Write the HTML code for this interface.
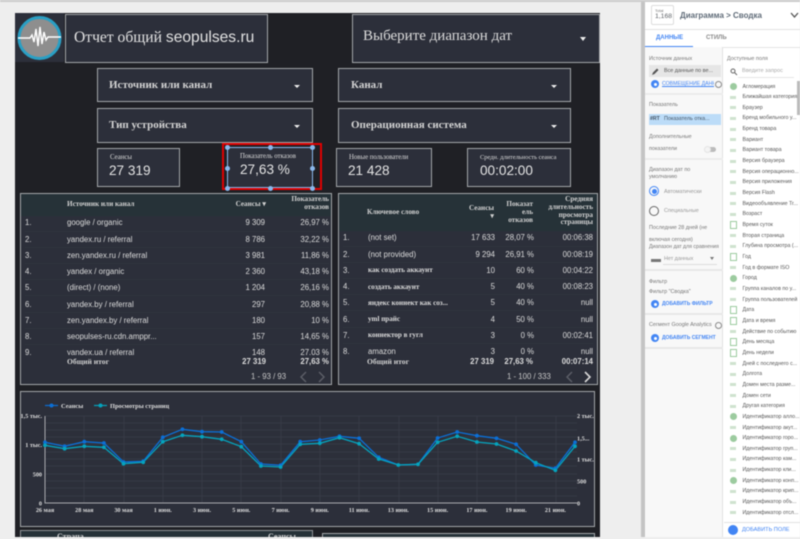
<!DOCTYPE html>
<html lang="ru"><head><meta charset="utf-8"><title>Отчет</title>
<style>
html,body{margin:0;padding:0;width:800px;height:539px;overflow:hidden;background:#eee}
#w{position:relative;width:800px;height:539px;overflow:hidden;filter:blur(.5px);font-family:"Liberation Serif","Noto Serif CJK SC",serif;color:#ddd}
#w div,#w span.a{position:absolute;box-sizing:border-box}
.b{background:#2c2f3a;border:1px solid #a3a6a9}
.s{font-family:"Liberation Sans",sans-serif}
.dd{font-size:11px;font-weight:bold;color:#d4d4d4}
.dd i{position:absolute;width:0;height:0;border:3px solid transparent;border-top:3px solid #eee;border-bottom:0;top:16px}
.k1{font-size:6.8px;color:#ddd;left:12px;top:5px;white-space:nowrap}
.k2{font-family:"Liberation Sans",sans-serif;font-size:13.6px;color:#e4e4e4;left:11px;top:14px;white-space:nowrap}
table{position:absolute;border-collapse:collapse;table-layout:fixed;font-size:7.8px;color:#dcdcdc}
td{height:16.2px;box-sizing:border-box;padding:0;white-space:nowrap;border-bottom:1px solid #30343e;font-family:"Liberation Sans",sans-serif;overflow:hidden}
td.r{text-align:right}td.c{font-family:"Liberation Serif",serif;font-weight:bold;font-size:7.1px}
.hd{font-size:7.2px;font-weight:bold;color:#d2d2d2;line-height:7.8px}
.r{text-align:right}
.side{font-family:"Liberation Sans",sans-serif;color:#777;white-space:nowrap}
.lst{left:724px;top:81.5px;width:76px;font-size:5.3px;line-height:10.67px;font-family:"Liberation Sans",sans-serif;color:#555}
.lst p{margin:0;height:10.67px;white-space:nowrap;padding-left:18.5px;position:relative;overflow:hidden}
.lst p:before{content:"";position:absolute;left:6px;top:3.5px;width:6px;height:3px;background:#cfe3cf}
.lst p.g:before{left:6px;top:1.5px;width:7px;height:7px;border-radius:50%;background:#9ccb9f}
.lst p.c:before{left:6px;top:1px;width:7px;height:8px;background:#fff;border:1px solid #9ccb9f;box-sizing:border-box}
.blue{color:#4285f4;font-weight:bold}
.plus{background:#4285f4;border-radius:50%;width:8px;height:8px}
.plus:after{content:"";position:absolute;left:2.500px;top:2.500px;width:3px;height:3px;background:#fff;border-radius:50%}
.h{width:5px;height:5px;border-radius:50%;background:#8ab8ec}
</style></head><body><div id="w">

<!-- top line, canvas -->
<div style="left:0;top:0;width:800px;height:2px;background:#ccc"></div>
<div style="left:15px;top:13px;width:585px;height:526px;background:#1f2025"></div>

<!-- logo -->
<div style="left:15px;top:13px;width:49px;height:49px;background:#2c2f3a"></div>
<svg style="position:absolute;left:15px;top:13px" width="49" height="49" viewBox="0 0 49 49">
<circle cx="24.5" cy="25" r="20.5" fill="#8e8e8e" stroke="#2a9fc4" stroke-width="3"/>
<path d="M3 25H15L17 22L19 29L21 16L23 33L25 14L27 31L29 19L31 27L33 24H46" fill="none" stroke="#fff" stroke-width="1.4"/>
</svg>

<!-- title -->
<div class="b" style="left:65px;top:14px;width:203px;height:49px"><span class="a" style="left:8px;top:14px;font-size:15.6px;white-space:nowrap;color:#e2e2e2">Отчет общий <span class="s" style="font-size:15.6px">seopulses.ru</span></span></div>
<div class="b" style="left:352px;top:14px;width:248px;height:49px"><span class="a" style="left:10px;top:13px;font-size:15px;white-space:nowrap;color:#dcdcdc">Выберите диапазон дат</span><i style="position:absolute;left:227px;top:22px;width:0;height:0;border:3px solid transparent;border-top:4px solid #eee;border-bottom:0"></i></div>

<!-- dropdowns -->
<div class="b dd" style="left:97px;top:68px;width:216px;height:34px"><span class="a" style="left:11px;top:10px;white-space:nowrap">Источник или канал</span><i style="left:196px"></i></div>
<div class="b dd" style="left:338px;top:68px;width:233px;height:34px"><span class="a" style="left:12px;top:10px;white-space:nowrap">Канал</span><i style="left:212px"></i></div>
<div class="b dd" style="left:97px;top:108px;width:216px;height:35px"><span class="a" style="left:11px;top:10px;white-space:nowrap">Тип устройства</span><i style="left:196px"></i></div>
<div class="b dd" style="left:338px;top:108px;width:233px;height:35px"><span class="a" style="left:12px;top:10px;white-space:nowrap">Операционная система</span><i style="left:212px"></i></div>

<!-- KPI -->
<div class="b" style="left:97px;top:148px;width:83px;height:39px"><div class="k1">Сеансы</div><div class="k2">27 319</div></div>
<div style="left:222px;top:143px;width:100px;height:47px;border:2px solid #e00000"></div>
<div style="left:227px;top:147px;width:86px;height:41px;background:#2c2f3a;border:1px solid #8ab8ec"><div class="k1" style="left:12px;top:5px">Показатель отказов</div><div class="k2" style="left:12px;top:14px">27,63 %</div></div>
<div class="h" style="left:225px;top:144.5px"></div><div class="h" style="left:268px;top:144.5px"></div><div class="h" style="left:310px;top:144.5px"></div>
<div class="h" style="left:225px;top:166px"></div><div class="h" style="left:310px;top:166px"></div>
<div class="h" style="left:225px;top:185.5px"></div><div class="h" style="left:268px;top:185.5px"></div><div class="h" style="left:310px;top:185.5px"></div>
<div class="b" style="left:336px;top:148px;width:96px;height:39px"><div class="k1" style="left:12px">Новые пользователи</div><div class="k2">21 428</div></div>
<div class="b" style="left:467px;top:148px;width:104px;height:39px"><div class="k1" style="left:12px;font-size:6.4px">Средн. длительность сеанса</div><div class="k2" style="left:12px">00:02:00</div></div>

<!-- left table -->
<div class="b" style="left:20px;top:193px;width:312px;height:192px;overflow:hidden">
<div style="left:0;top:0;width:310px;height:22px;background:#263238"></div>
<div class="hd" style="left:46px;top:7px;white-space:nowrap">Источник или канал</div>
<div class="hd r" style="left:200px;top:7px;width:45px;white-space:nowrap">Сеансы &#9662;</div>
<div class="hd r" style="left:250px;top:2px;width:58px">Показатель<br>отказов</div>
<div style="left:0;top:22px;width:310px;height:139px;overflow:hidden">
<table style="left:4px;top:-1px;width:304px">
<colgroup><col style="width:42px"><col style="width:152px"><col style="width:46px"><col style="width:64px"></colgroup>
<tr><td>1.</td><td>google / organic</td><td class="r">9 309</td><td class="r">26,97 %</td></tr>
<tr><td>2.</td><td>yandex.ru / referral</td><td class="r">8 786</td><td class="r">32,22 %</td></tr>
<tr><td>3.</td><td>zen.yandex.ru / referral</td><td class="r">3 981</td><td class="r">11,86 %</td></tr>
<tr><td>4.</td><td>yandex / organic</td><td class="r">2 360</td><td class="r">43,18 %</td></tr>
<tr><td>5.</td><td>(direct) / (none)</td><td class="r">1 204</td><td class="r">26,16 %</td></tr>
<tr><td>6.</td><td>yandex.by / referral</td><td class="r">297</td><td class="r">20,88 %</td></tr>
<tr><td>7.</td><td>zen.yandex.by / referral</td><td class="r">180</td><td class="r">10 %</td></tr>
<tr><td>8.</td><td>seopulses-ru.cdn.amppr...</td><td class="r">157</td><td class="r">14,65 %</td></tr>
<tr><td>9.</td><td>yandex.ua / referral</td><td class="r">148</td><td class="r">27,03 %</td></tr>
</table></div>
<div style="left:0;top:161px;width:310px;height:29px;background:#2c2f3a"></div>
<div class="hd" style="left:46px;top:164px;font-size:7.6px;white-space:nowrap">Общий итог</div>
<div class="s r" style="left:200px;top:163px;width:45px;font-size:7.8px;font-weight:bold">27 319</div>
<div class="s r" style="left:250px;top:163px;width:58px;font-size:7.8px;font-weight:bold">27,63 %</div>
<div class="s" style="left:230px;top:178px;font-size:7.8px;white-space:nowrap;color:#c8c8c8">1 - 93 / 93</div>
<svg style="position:absolute;left:274px;top:177px" width="36" height="12"><path d="M11 1L6 6L11 11" fill="none" stroke="#5d6068" stroke-width="1.4"/><path d="M24 1L29 6L24 11" fill="none" stroke="#5d6068" stroke-width="1.4"/></svg>
</div>

<!-- right table -->
<div class="b" style="left:338px;top:193px;width:260px;height:192px;overflow:hidden">
<div style="left:0;top:0;width:258px;height:37px;background:#263238"></div>
<div class="hd" style="left:28px;top:15px;white-space:nowrap">Ключевое слово</div>
<div class="hd r" style="left:115px;top:11px;width:40px">Сеансы<br>&#9662;</div>
<div class="hd r" style="left:158px;top:7px;width:36px">Показат<br>ель<br>отказов</div>
<div class="hd r" style="left:190px;top:2px;width:64px">Средняя<br>длительность<br>просмотра<br>страницы</div>
<div style="left:0;top:37px;width:258px;height:124px;overflow:hidden">
<table style="left:4px;top:-1px;width:250px">
<colgroup><col style="width:25px"><col style="width:101px"><col style="width:26px"><col style="width:39px"><col style="width:59px"></colgroup>
<tr><td>1.</td><td>(not set)</td><td class="r">17 633</td><td class="r">28,07 %</td><td class="r">00:06:38</td></tr>
<tr><td>2.</td><td>(not provided)</td><td class="r">9 294</td><td class="r">26,91 %</td><td class="r">00:08:19</td></tr>
<tr><td>3.</td><td class="c">как создать аккаунт</td><td class="r">10</td><td class="r">60 %</td><td class="r">00:04:22</td></tr>
<tr><td>4.</td><td class="c">создать аккаунт</td><td class="r">5</td><td class="r">40 %</td><td class="r">00:08:23</td></tr>
<tr><td>5.</td><td class="c">яндекс коннект как соз...</td><td class="r">5</td><td class="r">40 %</td><td class="r">null</td></tr>
<tr><td>6.</td><td class="c">yml прайс</td><td class="r">4</td><td class="r">50 %</td><td class="r">null</td></tr>
<tr><td>7.</td><td class="c">коннектор в гугл</td><td class="r">3</td><td class="r">0 %</td><td class="r">00:02:41</td></tr>
<tr><td>8.</td><td>amazon</td><td class="r">3</td><td class="r">0 %</td><td class="r">null</td></tr>
</table></div>
<div class="hd" style="left:28px;top:164px;font-size:7.6px;white-space:nowrap">Общий итог</div>
<div class="s r" style="left:105px;top:163px;width:50px;font-size:7.8px;font-weight:bold">27 319</div>
<div class="s r" style="left:150px;top:163px;width:44px;font-size:7.8px;font-weight:bold">27,63 %</div>
<div class="s r" style="left:195px;top:163px;width:59px;font-size:7.8px;font-weight:bold">00:07:14</div>
<div class="s" style="left:168px;top:178px;font-size:7.8px;white-space:nowrap;color:#c8c8c8">1 - 100 / 333</div>
<svg style="position:absolute;left:222px;top:177px" width="36" height="12"><path d="M11 1L6 6L11 11" fill="none" stroke="#5d6068" stroke-width="1.4"/><path d="M24 1L29 6L24 11" fill="none" stroke="#d8d8d8" stroke-width="1.6"/></svg>
</div>

<!-- chart -->
<div class="b" style="left:20px;top:391px;width:575px;height:136px"></div>
<svg style="position:absolute;left:0;top:385px" width="640" height="140" viewBox="0 385 640 140">
<g stroke="#363a45" stroke-width="1">
<path d="M45 416H577M45 423H577M45 430H577M45 437H577M45 444H577M45 452H577M45 459H577M45 466H577M45 474H577M45 481H577M45 488H577M45 496H577"/>
<path d="M84 416V503M124 416V503M163 416V503M202 416V503M241 416V503M281 416V503M320 416V503M359 416V503M399 416V503M438 416V503M477 416V503M516 416V503M556 416V503"/>
</g>
<path d="M45 416V503H577" fill="none" stroke="#a9abaf" stroke-width="1"/>
<polyline fill="none" stroke="#0b6fd6" stroke-width="1.3" points="45,442.3 64.6,446.3 84.3,441.7 103.9,443 123.5,462 143.2,461.3 162.8,437.3 182.4,429.3 202,431.7 221.7,432 241.3,441.7 260.9,464 280.6,465.3 300.2,441.7 319.8,440 339.5,436.3 359.1,438.3 378.7,457.3 398.3,465 418,464.3 437.6,438 457.2,432 476.9,435.7 496.5,438.3 516.1,444.3 535.8,465 555.4,468.3 575,442.3"/>
<polyline fill="none" stroke="#05a3bd" stroke-width="1.3" points="45,445.3 64.6,448.7 84.3,446.3 103.9,447.3 123.5,463.7 143.2,462.3 162.8,441.7 182.4,435.3 202,436.7 221.7,439.3 241.3,446.7 260.9,466 280.6,467 300.2,444.3 319.8,443.3 339.5,437.7 359.1,443.7 378.7,459 398.3,465 418,464.3 437.6,442.3 457.2,436.3 476.9,442 496.5,444 516.1,451 535.8,462.7 555.4,470.3 575,446.3"/>
<g fill="#0b6fd6">
<circle cx="45" cy="442.3" r="1.9"/><circle cx="64.6" cy="446.3" r="1.9"/><circle cx="84.3" cy="441.7" r="1.9"/><circle cx="103.9" cy="443" r="1.9"/><circle cx="123.5" cy="462" r="1.9"/><circle cx="143.2" cy="461.3" r="1.9"/><circle cx="162.8" cy="437.3" r="1.9"/><circle cx="182.4" cy="429.3" r="1.9"/><circle cx="202" cy="431.7" r="1.9"/><circle cx="221.7" cy="432" r="1.9"/><circle cx="241.3" cy="441.7" r="1.9"/><circle cx="260.9" cy="464" r="1.9"/><circle cx="280.6" cy="465.3" r="1.9"/><circle cx="300.2" cy="441.7" r="1.9"/><circle cx="319.8" cy="440" r="1.9"/><circle cx="339.5" cy="436.3" r="1.9"/><circle cx="359.1" cy="438.3" r="1.9"/><circle cx="378.7" cy="457.3" r="1.9"/><circle cx="437.6" cy="438" r="1.9"/><circle cx="457.2" cy="432" r="1.9"/><circle cx="476.9" cy="435.7" r="1.9"/><circle cx="496.5" cy="438.3" r="1.9"/><circle cx="516.1" cy="444.3" r="1.9"/><circle cx="535.8" cy="465" r="1.9"/><circle cx="555.4" cy="468.3" r="1.9"/><circle cx="575" cy="442.3" r="1.9"/>
</g>
<g fill="#05a3bd">
<circle cx="45" cy="445.3" r="1.9"/><circle cx="64.6" cy="448.7" r="1.9"/><circle cx="84.3" cy="446.3" r="1.9"/><circle cx="103.9" cy="447.3" r="1.9"/><circle cx="123.5" cy="463.7" r="1.9"/><circle cx="143.2" cy="462.3" r="1.9"/><circle cx="162.8" cy="441.7" r="1.9"/><circle cx="182.4" cy="435.3" r="1.9"/><circle cx="202" cy="436.7" r="1.9"/><circle cx="221.7" cy="439.3" r="1.9"/><circle cx="241.3" cy="446.7" r="1.9"/><circle cx="260.9" cy="466" r="1.9"/><circle cx="280.6" cy="467" r="1.9"/><circle cx="300.2" cy="444.3" r="1.9"/><circle cx="319.8" cy="443.3" r="1.9"/><circle cx="339.5" cy="437.7" r="1.9"/><circle cx="359.1" cy="443.7" r="1.9"/><circle cx="378.7" cy="459" r="1.9"/><circle cx="398.3" cy="465" r="1.9"/><circle cx="418" cy="464.3" r="1.9"/><circle cx="437.6" cy="442.3" r="1.9"/><circle cx="457.2" cy="436.3" r="1.9"/><circle cx="476.9" cy="442" r="1.9"/><circle cx="496.5" cy="444" r="1.9"/><circle cx="516.1" cy="451" r="1.9"/><circle cx="535.8" cy="462.7" r="1.9"/><circle cx="555.4" cy="470.3" r="1.9"/><circle cx="575" cy="446.3" r="1.9"/>
</g>
<path d="M45 405.5H58" stroke="#0b6fd6" stroke-width="1.2"/><circle cx="51.5" cy="405.5" r="2" fill="#0b6fd6"/>
<path d="M94 405.5H107" stroke="#05a3bd" stroke-width="1.2"/><circle cx="100.5" cy="405.5" r="2" fill="#05a3bd"/>
<g font-family="Liberation Serif, serif" font-size="6.2" fill="#ddd" font-weight="bold">
<text x="61" y="408" font-size="6.4">Сеансы</text><text x="110" y="408" font-size="6.4">Просмотры страниц</text>
<text x="42" y="418" text-anchor="end">1,5 тыс.</text><text x="42" y="447" text-anchor="end">1 тыс.</text><text x="42" y="476.500" text-anchor="end">500</text><text x="42" y="505.500" text-anchor="end">0</text>
<text x="577" y="418">2 тыс.</text><text x="577" y="440.500">1,5...</text><text x="577" y="461.500">1 тыс.</text><text x="577" y="483.500">500</text><text x="577" y="505.500">0</text>
<g text-anchor="middle"><text x="45" y="512">26 мая</text><text x="84.3" y="512">28 мая</text><text x="123.5" y="512">30 мая</text><text x="162.8" y="512">1 июн.</text><text x="202" y="512">3 июн.</text><text x="241.3" y="512">5 июн.</text><text x="280.6" y="512">7 июн.</text><text x="319.8" y="512">9 июн.</text><text x="359.1" y="512">11 июн.</text><text x="398.3" y="512">13 июн.</text><text x="437.6" y="512">15 июн.</text><text x="476.9" y="512">17 июн.</text><text x="516.1" y="512">19 июн.</text><text x="555.4" y="512">21 июн.</text></g>
</g>
</svg>

<!-- bottom tables -->
<div style="left:20px;top:530px;width:293px;height:12px;background:#263238;border:1px solid #8e9296"><span class="a hd" style="left:36px;top:2px;font-size:8px">Страна</span><span class="a hd" style="left:247px;top:2px;font-size:8px">Сеансы</span></div>
<div style="left:322px;top:533px;width:273px;height:9px;background:#263238;border:1px solid #a3a6a9"></div>
<div style="left:0;top:537px;width:640px;height:2px;background:#eee"></div>

<!-- sidebar -->
<div style="left:641px;top:2px;width:4px;height:535px;background:#c4c4c4"></div>
<div style="left:645px;top:2px;width:155px;height:535px;background:#fff"></div>
<div style="left:651px;top:5px;width:23px;height:20px;border:1px solid #ddd;border-radius:2px;background:#fff"><span class="a side" style="left:3px;top:2px;font-size:4px">Total</span><span class="a side" style="left:3px;top:7px;font-size:6.8px;color:#5f6368">1,168</span></div>
<div class="side" style="left:680px;top:11px;font-size:8px;font-weight:bold;color:#5f6b78">Диаграмма &gt; Сводка</div>
<svg style="position:absolute;left:790px;top:12px" width="9" height="7"><path d="M1 1L4.5 5L8 1" fill="none" stroke="#555" stroke-width="1.3"/></svg>
<div style="left:645px;top:29px;width:155px;height:1px;background:#e2e2e2"></div>
<div class="side" style="left:656px;top:35px;font-size:6px;color:#4285f4;font-weight:bold">ДАННЫЕ</div>
<div class="side" style="left:706px;top:35px;font-size:6px;color:#8a8a8a;font-weight:bold">СТИЛЬ</div>
<div style="left:645px;top:45.5px;width:48px;height:1.5px;background:#4285f4"></div>
<div style="left:645px;top:47px;width:155px;height:1px;background:#e4e4e4"></div>

<div style="left:645px;top:47px;width:78px;height:490px;background:#f8f8f8;border-right:1px solid #e2e2e2"></div>
<div class="side" style="left:649px;top:56px;font-size:5.4px">Источник данных</div>
<div style="left:649px;top:65px;width:72px;height:12px;background:#e6e6e6"></div>
<svg style="position:absolute;left:651px;top:67px" width="9" height="9"><path d="M1 8L2 5.500L6 1.500L7.500 3L3.500 7Z" fill="#555"/></svg>
<div class="side" style="left:664px;top:68px;font-size:5.4px;color:#555">Все данные по ве...</div>
<div class="plus" style="left:651px;top:80px"></div>
<div class="side" style="left:662px;top:81px;font-size:5.2px;color:#4285f4;width:52px;overflow:hidden;text-decoration:underline">СОВМЕЩЕНИЕ ДАННЫХ</div>
<div style="left:715px;top:81px;width:7px;height:7px;border:1px solid #888;border-radius:50%"></div>
<div style="left:645px;top:93px;width:78px;height:2px;background:#ececec"></div>
<div class="side" style="left:649px;top:102px;font-size:5.4px">Показатель</div>
<div style="left:649px;top:114px;width:72px;height:11px;background:#bcdcf8"></div>
<div class="side" style="left:650px;top:116px;font-size:5.2px;font-weight:bold;color:#456">#RT</div>
<div class="side" style="left:664px;top:116px;font-size:5.4px;color:#456">Показатель отка...</div>
<div class="side" style="left:649px;top:134px;font-size:5.4px">Дополнительные</div>
<div class="side" style="left:649px;top:146px;font-size:5.4px">показатели</div>
<div style="left:706px;top:147px;width:10px;height:5px;border-radius:3px;background:#bbb"></div>
<div style="left:704px;top:146px;width:7px;height:7px;border-radius:50%;background:#f4f4f4;border:1px solid #e4e4e4"></div>
<div style="left:645px;top:158px;width:78px;height:2px;background:#ececec"></div>
<div class="side" style="left:649px;top:167px;font-size:5.4px">Диапазон дат по</div>
<div class="side" style="left:649px;top:174px;font-size:5.4px">умолчанию</div>
<div style="left:649px;top:186px;width:10px;height:10px;border-radius:50%;border:1.5px solid #4285f4"></div>
<div style="left:651.5px;top:188.500px;width:5px;height:5px;border-radius:50%;background:#4285f4"></div>
<div class="side" style="left:664px;top:189px;font-size:5.4px;color:#999">Автоматически</div>
<div style="left:649px;top:206px;width:10px;height:10px;border-radius:50%;border:1.5px solid #666"></div>
<div class="side" style="left:664px;top:208px;font-size:5.4px;color:#999">Специальные</div>
<div class="side" style="left:649px;top:225px;font-size:5.4px">Последние 28 дней (не</div>
<div class="side" style="left:649px;top:237px;font-size:5.4px">включая сегодня)</div>
<div class="side" style="left:649px;top:244px;font-size:5.2px">Диапазон дат для сравнения</div>
<div style="left:651px;top:259px;width:10px;height:3px;background:#777"></div>
<div class="side" style="left:664px;top:256px;font-size:5.4px;color:#999">Нет данных</div>
<i style="position:absolute;left:710px;top:257px;width:0;height:0;border:2px solid transparent;border-top:3px solid #777;border-bottom:0"></i>
<div style="left:663px;top:264px;width:54px;height:1px;background:#ddd"></div>
<div style="left:645px;top:269px;width:78px;height:2px;background:#e8e8e8"></div>
<div class="side" style="left:649px;top:279px;font-size:5.4px">Фильтр</div>
<div class="side" style="left:649px;top:289px;font-size:5.4px">Фильтр "Сводка"</div>
<div class="plus" style="left:651px;top:300px"></div>
<div class="side blue" style="left:662px;top:301px;font-size:5px;color:#4285f4">ДОБАВИТЬ ФИЛЬТР</div>
<div style="left:645px;top:313px;width:78px;height:2px;background:#e8e8e8"></div>
<div class="side" style="left:649px;top:322px;font-size:5.4px">Сегмент Google Analytics</div>
<div style="left:715px;top:322px;width:7px;height:7px;border:1px solid #888;border-radius:50%"></div>
<div class="plus" style="left:651px;top:334px"></div>
<div class="side blue" style="left:662px;top:335px;font-size:5px;color:#4285f4">ДОБАВИТЬ СЕГМЕНТ</div>
<div style="left:645px;top:347px;width:78px;height:2px;background:#e8e8e8"></div>

<div class="side" style="left:727px;top:56px;font-size:5.4px">Доступные поля</div>
<svg style="position:absolute;left:730px;top:68px" width="8" height="8"><circle cx="3" cy="3" r="2" fill="none" stroke="#666"/><path d="M4.500 4.500L7 7" stroke="#666"/></svg>
<div class="side" style="left:742px;top:68px;font-size:5.6px;color:#aaa">Введите запрос</div>
<div style="left:738px;top:77px;width:56px;height:1px;background:#e6e6e6"></div>

<div class="lst" style="position:absolute">
<p class="g">Агломерация</p><p>Ближайшая категория (...</p><p>Браузер</p><p>Бренд мобильного у...</p><p>Бренд товара</p><p>Вариант</p><p>Вариант товара</p><p>Версия браузера</p><p>Версия операционно...</p><p>Версия приложения</p><p>Версия Flash</p><p>Видеообъявление Tr...</p><p>Возраст</p><p class="c">Время суток</p><p>Вторая страница</p><p>Глубина просмотра (...</p><p class="c">Год</p><p>Год в формате ISO</p><p class="g">Город</p><p>Группа каналов по у...</p><p>Группа пользователей</p><p class="c">Дата</p><p class="c">Дата и время</p><p>Действие по событию</p><p class="c">День месяца</p><p class="c">День недели</p><p>Дней с последнего с...</p><p>Долгота</p><p>Домен места разме...</p><p>Домен сети</p><p>Другая категория</p><p class="g">Идентификатор алло...</p><p>Идентификатор акут...</p><p class="g">Идентификатор горо...</p><p>Идентификатор груп...</p><p>Идентификатор кам...</p><p>Идентификатор кли...</p><p class="g">Идентификатор конп...</p><p>Идентификатор крип...</p><p>Идентификатор объ...</p><p>Идентификатор отсл...</p>
</div>
<div style="left:797px;top:81px;width:3px;height:34px;background:#bbb"></div>
<div style="left:724px;top:522px;width:76px;height:15px;background:#fff;border-top:1px solid #e2e2e2"></div>
<div style="left:728px;top:525px;width:10px;height:10px;border-radius:50%;background:#4285f4"></div>
<div class="side" style="left:742px;top:527px;font-size:5.6px;color:#4285f4;background:#fff">ДОБАВИТЬ ПОЛЕ</div>
<div style="left:0;top:537px;width:800px;height:2px;background:#eee"></div>
</div></body></html>
